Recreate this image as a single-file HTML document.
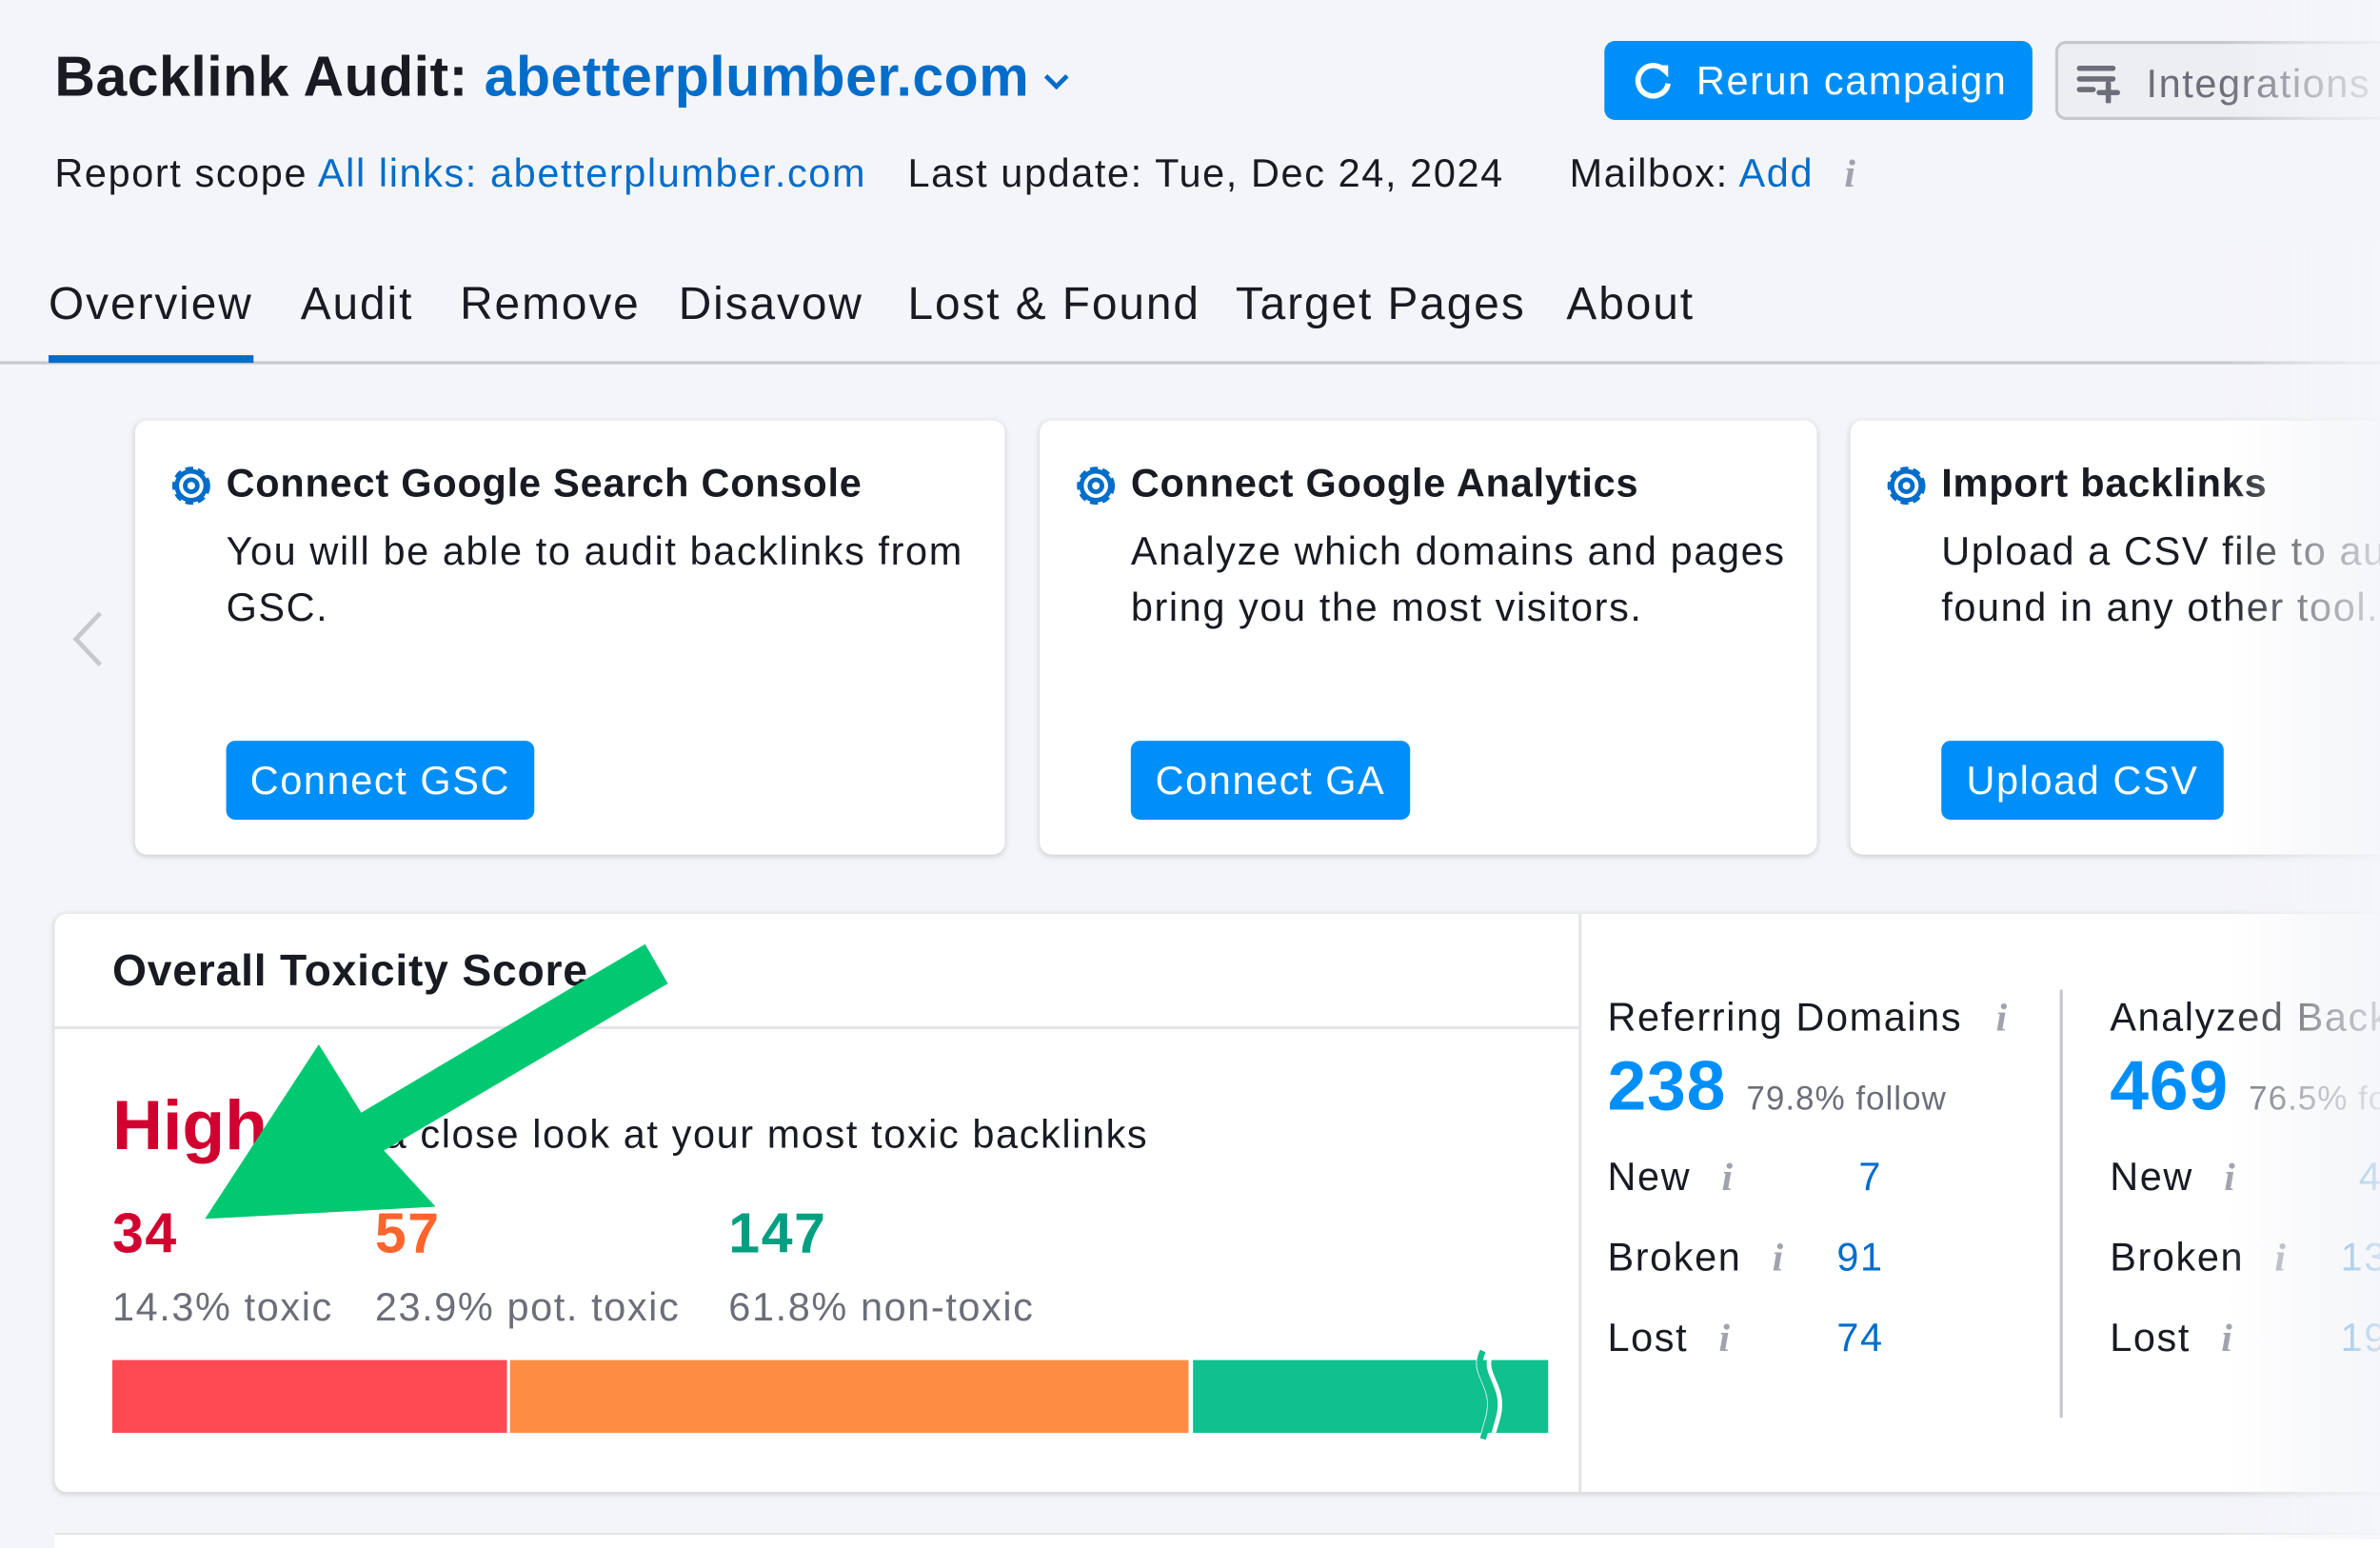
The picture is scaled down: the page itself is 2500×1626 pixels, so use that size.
<!DOCTYPE html>
<html><head><meta charset="utf-8">
<style>
*{box-sizing:border-box;margin:0;padding:0}
html,body{width:2500px;height:1616px;overflow:hidden;background:#f4f5f9}
body{font-family:"Liberation Sans",Arial,sans-serif;color:#191b23}
#w{position:absolute;left:0;top:0;width:1568px;height:1014px;transform:scale(1.5944);transform-origin:0 0;letter-spacing:1px}
.a{position:absolute;white-space:nowrap}
.blue{color:#006dca}
.btn{position:absolute;background:#008ff8;color:#fff;border-radius:6px;font-size:26px;display:flex;align-items:center;justify-content:center}
.card{position:absolute;background:#fff;border-radius:8px;box-shadow:0 1px 4px rgba(0,0,0,.18)}
.ct{position:absolute;left:60px;top:26px;font-size:26px;font-weight:bold;letter-spacing:0.5px}
.cd{position:absolute;left:60px;top:68px;font-size:26px;line-height:37px;color:#191b23;white-space:normal}
.gear{position:absolute;left:22px;top:28px}
.info{color:#a0a3ad;font-style:italic;font-family:"Liberation Serif",serif;font-weight:bold}
.tab{position:absolute;top:184px;font-size:30px;letter-spacing:1.2px;white-space:nowrap}
</style></head><body><div id="w">

<div class="a" style="left:36px;top:30px;font-size:37px;font-weight:bold;letter-spacing:0.3px">Backlink Audit: <span style="color:#006dca">abetterplumber.com</span></div>
<svg class="a" style="left:686px;top:44px" width="20" height="20" viewBox="0 0 20 20"><path d="M3 6l7 7 7-7" fill="none" stroke="#006dca" stroke-width="3"/></svg>

<div class="btn" style="left:1057px;top:27px;width:282px;height:52px;border-radius:7px"><svg width="30" height="30" viewBox="0 0 30 30" style="margin-right:14px"><path d="M23 9A10 10 0 1 0 25 17" fill="none" stroke="#fff" stroke-width="3.5"/><path d="M17 5h8v8z" fill="#fff"/></svg>Rerun campaign</div>
<div class="a" style="left:1354px;top:27px;width:260px;height:52px;border:2px solid #c6c8ce;background:#eceef2;border-radius:7px;font-size:26px;color:#6c6e79;padding:11px 0 0 58px">Integrations</div>
<svg class="a" style="left:1368px;top:42px" width="32" height="26" viewBox="0 0 32 26"><g stroke="#6c6e79" stroke-width="3.5" stroke-linecap="round"><path d="M2 3h22M2 10h22M2 17h9M21 13v12M15 19h12"/></g></svg>

<div class="a" style="left:36px;top:99px;font-size:26px">Report scope <span class="blue">All links: abetterplumber.com</span></div>
<div class="a" style="left:598px;top:99px;font-size:26px">Last update: Tue, Dec 24, 2024</div>
<div class="a" style="left:1034px;top:99px;font-size:26px">Mailbox: <span class="blue">Add</span> <span class="info" style="margin-left:12px">i</span></div>

<div class="a" style="left:0;top:238px;width:1568px;height:2px;background:#c6c8ce"></div>
<div class="tab" style="left:32px">Overview</div>
<div class="a" style="left:32px;top:234px;width:135px;height:5px;background:#006dca"></div>
<div class="tab" style="left:198px">Audit</div>
<div class="tab" style="left:303px">Remove</div>
<div class="tab" style="left:447px">Disavow</div>
<div class="tab" style="left:598px">Lost &amp; Found</div>
<div class="tab" style="left:814px">Target Pages</div>
<div class="tab" style="left:1032px">About</div>

<svg class="a" style="left:46px;top:402px" width="24" height="38" viewBox="0 0 24 38"><path d="M20 2L4 19l16 17" fill="none" stroke="#c6c8ce" stroke-width="3"/></svg>

<svg width="0" height="0" style="position:absolute"><defs><g id="g"><circle cx="15" cy="15" r="11" fill="none" stroke="#006dca" stroke-width="3" stroke-dasharray="5 3"/><circle cx="15" cy="15" r="9.5" fill="none" stroke="#006dca" stroke-width="3"/><circle cx="15" cy="15" r="4" fill="none" stroke="#006dca" stroke-width="3"/></g></defs></svg>

<div class="card" style="left:89px;top:277px;width:573px;height:286px">
<svg class="gear" width="30" height="30"><use href="#g"/></svg>
<div class="ct">Connect Google Search Console</div>
<div class="cd">You will be able to audit backlinks from GSC.</div>
<div class="btn" style="left:60px;top:211px;width:203px;height:52px">Connect GSC</div>
</div>
<div class="card" style="left:685px;top:277px;width:512px;height:286px">
<svg class="gear" width="30" height="30"><use href="#g"/></svg>
<div class="ct">Connect Google Analytics</div>
<div class="cd">Analyze which domains and pages bring you the most visitors.</div>
<div class="btn" style="left:60px;top:211px;width:184px;height:52px">Connect GA</div>
</div>
<div class="card" style="left:1219px;top:277px;width:420px;height:286px">
<svg class="gear" width="30" height="30"><use href="#g"/></svg>
<div class="ct">Import backlinks</div>
<div class="cd" style="white-space:nowrap">Upload a CSV file to audit<br>found in any other tool.</div>
<div class="btn" style="left:60px;top:211px;width:186px;height:52px">Upload CSV</div>
</div>

<div class="card" style="left:36px;top:602px;width:1600px;height:381px"></div>
<div class="a" style="left:1040px;top:602px;width:2px;height:381px;background:#e4e5e9"></div>
<div class="a" style="left:36px;top:676px;width:1004px;height:2px;background:#e4e5e9"></div>
<div class="a" style="left:74px;top:624px;font-size:29px;font-weight:bold;letter-spacing:0.5px">Overall Toxicity Score</div>

<div class="a" style="left:74px;top:714px;font-size:46px;font-weight:bold;color:#d1002f;letter-spacing:0">High</div>
<div class="a" style="left:186px;top:732px;font-size:26px">Take a close look at your most toxic backlinks</div>
<div class="a" style="left:74px;top:792px;font-size:37px;font-weight:bold;color:#d1002f">34</div>
<div class="a" style="left:247px;top:792px;font-size:37px;font-weight:bold;color:#ff642d">57</div>
<div class="a" style="left:480px;top:792px;font-size:37px;font-weight:bold;color:#009f81">147</div>
<div class="a" style="left:74px;top:846px;font-size:26px;color:#6c6e79">14.3% toxic</div>
<div class="a" style="left:247px;top:846px;font-size:26px;color:#6c6e79">23.9% pot. toxic</div>
<div class="a" style="left:480px;top:846px;font-size:26px;color:#6c6e79">61.8% non-toxic</div>
<div class="a" style="left:74px;top:896px;width:260px;height:48px;background:#ff4953"></div>
<div class="a" style="left:336px;top:896px;width:447px;height:48px;background:#ff8c43"></div>
<div class="a" style="left:786px;top:896px;width:234px;height:48px;background:#10c08f"></div>
<svg class="a" style="left:966px;top:888px" width="30" height="64" viewBox="0 0 30 64"><path d="M10 2c-8 16 10 22 4 44l-4 14M17 2c-8 16 10 22 4 44l-4 14" fill="none" stroke="#fff" stroke-width="3"/><path d="M11 2c-8 16 10 22 4 44l-4 14" fill="none" stroke="#10c08f" stroke-width="4"/></svg>

<svg class="a" style="left:0;top:0" width="1040" height="1014"><path d="M135 803L210 688L238 733L425 622L440 648L253 758L287 795Z" fill="#00c971"/></svg>

<div class="a" style="left:1059px;top:655px;font-size:26px">Referring Domains <span class="info" style="margin-left:14px">i</span></div>
<div class="a" style="left:1059px;top:688px;font-size:46px;font-weight:bold;color:#008ff8;letter-spacing:0.5px">238 <span style="font-size:22px;font-weight:normal;color:#6c6e79;letter-spacing:0.6px">79.8% follow</span></div>
<div class="a" style="left:1059px;top:760px;font-size:26px">New <span class="info" style="margin-left:12px">i</span></div>
<div class="a" style="left:1059px;top:813px;font-size:26px">Broken <span class="info" style="margin-left:12px">i</span></div>
<div class="a" style="left:1059px;top:866px;font-size:26px">Lost <span class="info" style="margin-left:12px">i</span></div>
<div class="a blue" style="left:1140px;width:100px;text-align:right;top:760px;font-size:26px">7</div>
<div class="a blue" style="left:1140px;width:101px;text-align:right;top:813px;font-size:26px">91</div>
<div class="a blue" style="left:1140px;width:101px;text-align:right;top:866px;font-size:26px">74</div>
<div class="a" style="left:1357px;top:652px;width:2px;height:282px;background:#c6c8ce"></div>
<div class="a" style="left:1390px;top:655px;font-size:26px">Analyzed Backlinks</div>
<div class="a" style="left:1390px;top:688px;font-size:46px;font-weight:bold;color:#008ff8;letter-spacing:0.5px">469 <span style="font-size:22px;font-weight:normal;color:#6c6e79;letter-spacing:0.6px">76.5% follow</span></div>
<div class="a" style="left:1390px;top:760px;font-size:26px">New <span class="info" style="margin-left:12px">i</span></div>
<div class="a" style="left:1390px;top:813px;font-size:26px">Broken <span class="info" style="margin-left:12px">i</span></div>
<div class="a" style="left:1390px;top:866px;font-size:26px">Lost <span class="info" style="margin-left:12px">i</span></div>
<div class="a blue" style="left:1554px;top:760px;font-size:26px">4</div>
<div class="a blue" style="left:1542px;top:813px;font-size:26px">13</div>
<div class="a blue" style="left:1542px;top:866px;font-size:26px">19</div>

<div class="a" style="left:36px;top:1010px;width:1540px;height:10px;background:#fff;border-top:1px solid #e0e1e5"></div>

<div class="a" style="left:1465px;top:0;width:103px;height:1014px;background:linear-gradient(90deg,rgba(244,245,249,0),rgba(244,245,249,.6) 60%,rgba(244,245,249,.85))"></div>
</div></body></html>
